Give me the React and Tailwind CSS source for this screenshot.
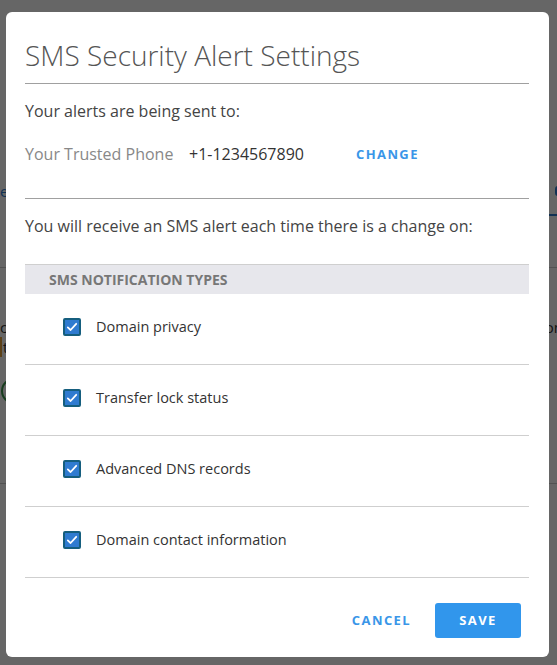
import React, { useState } from 'react';

const ALERT_TYPES = [
    { id: 'privacy', label: 'Domain privacy' },
    { id: 'lock', label: 'Transfer lock status' },
    { id: 'dns', label: 'Advanced DNS records' },
    { id: 'contact', label: 'Domain contact information' },
];

const CheckBox = ({ checked, onChange }) => (
    <button
        type="button"
        onClick={onChange}
        className={`flex h-[18px] w-[18px] shrink-0 items-center justify-center rounded-[2px] border-2 ${
            checked ? 'border-[#155e7e] bg-[#2f7bd0]' : 'border-[#8a8a8a] bg-white'
        }`}
    >
        {checked && (
            <svg width="12" height="12" viewBox="0 0 12 12" fill="none">
                <path d="M1.8 6.4 L4.6 9 L10.2 2.8" stroke="white" strokeWidth="1.8" strokeLinecap="round" strokeLinejoin="round" />
            </svg>
        )}
    </button>
);

// Page sitting behind the dimmed overlay
const BackgroundPage = () => (
    <div className="flex h-full flex-col bg-white text-[15px] text-[#333]">
        <div className="h-[180px]" />
        <div className="flex h-[22px] items-center justify-between">
            <span className="border-r-2 border-[#c06a2a] pr-[1px] text-[#2f7bd0]">e</span>
            <span className="mr-[-4px] h-[10px] w-[6px] rounded-sm bg-[#2f7bd0]" />
        </div>
        <div className="h-[12px]" />
        <div className="flex justify-end">
            <div className="h-[2px] w-[60px] bg-[#2f7bd0]" />
        </div>
        <div className="h-[52px] border-b border-[#ccc]" />
        <div className="flex h-[69px] items-end justify-between leading-[20px]">
            <span>contact</span>
            <span className="mr-[-6px]">on</span>
        </div>
        <div className="flex h-[20px] items-center leading-[20px]">
            <span className="border-l-2 border-[#e6a23c] pl-[1px]">text</span>
        </div>
        <div className="ml-[1px] mt-[21px] h-[26px] w-[26px] rounded-full border-2 border-[#3c9a4e]" />
        <div className="h-[80px] border-b border-[#ccc]" />
    </div>
);

export default function App() {
    const [selected, setSelected] = useState({ privacy: true, lock: true, dns: true, contact: true });

    const toggle = (id) => setSelected((prev) => ({ ...prev, [id]: !prev[id] }));

    return (
        <div className="relative h-[665px] w-[557px] overflow-hidden font-['Open_Sans',sans-serif]">
            <BackgroundPage />

            <div className="absolute inset-0 bg-black/60" />

            <div className="absolute left-[6px] top-[12px] flex h-[645px] w-[543px] flex-col rounded-[6px] bg-white pl-[19px] pr-[20px] pt-[24px]">
                <h2 className="h-[48px] border-b border-[#a0a0a0] text-[28px] font-light leading-[38px] text-[#555]">
                    SMS Security Alert Settings
                </h2>

                <p className="mt-[16px] text-[16px] leading-[22px] text-[#444]">Your alerts are being sent to:</p>

                <div className="mt-[21px] flex items-center text-[16px] leading-[22px]">
                    <span className="w-[164px] text-[#888]">Your Trusted Phone</span>
                    <span className="w-[167px] text-[#333]">+1-1234567890</span>
                    <button type="button" className="text-[13px] font-bold tracking-[1.4px] text-[#3a96e8]">
                        CHANGE
                    </button>
                </div>

                <div className="mt-[33px] border-t border-[#a0a0a0]" />

                <p className="mt-[16px] text-[16px] leading-[22px] text-[#444]">
                    You will receive an SMS alert each time there is a change on:
                </p>

                <div className="mt-[27px] flex h-[30px] items-center border-t border-[#cfcfcf] bg-[#e7e7ec] pl-[24px] text-[14px] font-bold text-[#777]">
                    SMS NOTIFICATION TYPES
                </div>

                <ul>
                    {ALERT_TYPES.map((item) => (
                        <li key={item.id} className="flex h-[71px] items-center border-b border-[#cfcfcf] pb-[4px] pl-[38px]">
                            <CheckBox checked={selected[item.id]} onChange={() => toggle(item.id)} />
                            <span className="ml-[15px] text-[14.5px] text-[#333]">{item.label}</span>
                        </li>
                    ))}
                </ul>

                <div className="mt-[25px] flex items-center justify-end gap-[24px] pr-[8px]">
                    <button type="button" className="text-[13px] font-bold tracking-[1.4px] text-[#3a96e8]">
                        CANCEL
                    </button>
                    <button
                        type="button"
                        className="h-[35px] w-[86px] rounded-[3px] bg-[#3196ec] text-[13px] font-bold tracking-[1.4px] text-white"
                    >
                        SAVE
                    </button>
                </div>
            </div>
        </div>
    );
}
